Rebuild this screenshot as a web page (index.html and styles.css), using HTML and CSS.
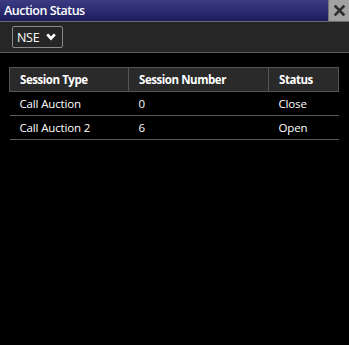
FILE: index.html
```html
<!DOCTYPE html>
<html>
<head>
<meta charset="utf-8">
<link rel="stylesheet" href="styles.css">
</head>
<body>
<div class="window">
  <div class="titlebar">
    <span class="title">Auction Status</span>
    <button class="close" aria-label="Close">
      <svg width="11" height="11" viewBox="0 0 11 11"><path d="M1.5 1.5 L9.5 9.5 M9.5 1.5 L1.5 9.5" stroke="#2e2e2e" stroke-width="2.6" stroke-linecap="square"/></svg>
    </button>
  </div>
  <div class="toolbar">
    <div class="select">
      <span class="select-label">NSE</span>
      <svg class="chev" width="10" height="8" viewBox="0 0 10 8"><path d="M1.2 1.4 L5 5.4 L8.8 1.4" fill="none" stroke="#fff" stroke-width="2.8"/></svg>
    </div>
  </div>
  <div class="content">
    <table class="grid">
      <thead>
        <tr><th class="c1">Session Type</th><th class="c2">Session Number</th><th class="c3">Status</th></tr>
      </thead>
      <tbody>
        <tr><td>Call Auction</td><td>0</td><td>Close</td></tr>
        <tr><td>Call Auction 2</td><td>6</td><td>Open</td></tr>
      </tbody>
    </table>
  </div>
</div>
</body>
</html>
```
FILE: styles.css
```css
html, body {
  margin: 0;
  padding: 0;
  background: #000;
}
.window {
  width: 349px;
  height: 345px;
  background: #000;
  font-family: "Open Sans", "Noto Sans", sans-serif;
  color: #fff;
  overflow: hidden;
}
.titlebar {
  height: 21px;
  display: flex;
  align-items: stretch;
  background: linear-gradient(to bottom, #3c3c84 0%, #2c2c72 50%, #1c1c5e 100%);
  border-bottom: 1px solid #6a6a6a;
}
.title {
  flex: 1;
  padding-left: 4px;
  font-size: 12.5px;
  font-weight: 600;
  line-height: 21px;
  letter-spacing: -0.5px;
}
.close {
  width: 21px;
  margin: 0;
  padding: 0;
  border: none;
  border-left: 1px solid #777;
  background: #a2a2a2;
  display: flex;
  align-items: center;
  justify-content: center;
}
.toolbar {
  height: 30px;
  background: #262626;
  border-bottom: 1px solid #5a5a5a;
  display: flex;
  align-items: center;
  padding-left: 12px;
}
.select {
  box-sizing: border-box;
  width: 51px;
  height: 22px;
  border: 1px solid #8a8a8a;
  border-radius: 2px;
  display: flex;
  align-items: center;
  justify-content: space-between;
  padding: 0 6px 0 4px;
}
.select-label {
  font-size: 12.5px;
  font-weight: 500;
  letter-spacing: -0.3px;
}
.chev {
  display: block;
}
.content {
  padding: 14px 10px 0 9px;
}
.grid {
  width: 330px;
  border-collapse: collapse;
  font-size: 11.5px;
}
.grid th {
  background: #2a2a2a;
  border: 1px solid #555;
  height: 23px;
  padding: 0 0 0 10px;
  text-align: left;
  font-weight: 700;
  letter-spacing: -0.45px;
}
.grid td {
  height: 23px;
  padding: 0 0 0 10px;
  border-bottom: 1px solid #5a5a5a;
  font-weight: 500;
  letter-spacing: -0.15px;
}
.c1 { width: 108px; }
.c2 { width: 129px; }
```
